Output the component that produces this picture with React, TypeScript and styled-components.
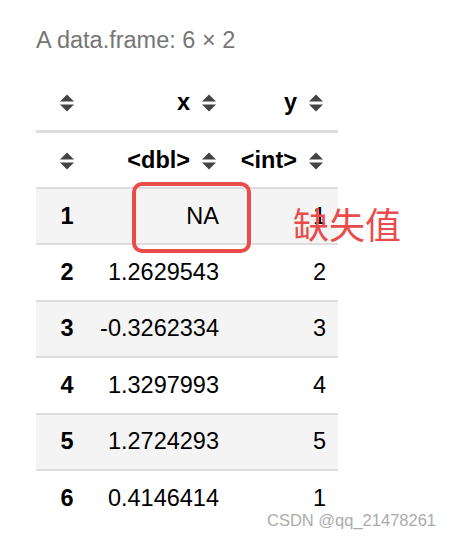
import styled, { createGlobalStyle } from "styled-components";
import { Fragment } from "react";

const GlobalStyle = createGlobalStyle`
    body {
        margin: 0;
        background: #ffffff;
        font-family: "Liberation Sans", Arial, sans-serif;
        color: #111111;
    }
`;

const Page = styled.div`
    position: relative;
    width: 452px;
    height: 538px;
    padding: 27px 0 0 36px;
    box-sizing: border-box;
    overflow: hidden;
`;
const Caption = styled.div`
    font-size: 23.5px;
    line-height: 27px;
    color: #767676;
`;
const Table = styled.table`
    margin-top: 21px;
    width: 302px;
    table-layout: fixed;
    border-collapse: separate;
    border-spacing: 0;
    font-size: 23.5px;
`;
const HeadCell = styled.th<{ $index?: boolean; $last?: boolean }>`
    padding: 0 ${(p) => (p.$index ? "0" : "15px")} 0 0;
    height: ${(p) => (p.$last ? "54px" : "55px")};
    text-align: ${(p) => (p.$index ? "center" : "right")};
    font-weight: bold;
    white-space: nowrap;
    border-bottom: ${(p) => (p.$last ? "2px" : "3px")} solid #dddddd;
    color: #000000;
`;
const Row = styled.tr<{ $shaded: boolean }>`
    background: ${(p) => (p.$shaded ? "#f4f4f4" : "#ffffff")};

    &:last-child > * {
        border-bottom-color: transparent;
    }
`;
const IndexCell = styled.th`
    height: 54.4px;
    padding: 0;
    text-align: center;
    font-weight: bold;
    border-bottom: 2px solid #dddddd;
    color: #000000;
`;
const Cell = styled.td`
    height: 54.4px;
    padding: 0 12px 0 0;
    text-align: right;
    border-bottom: 2px solid #dddddd;
    color: #000000;
`;
const SortIcon = styled.svg<{ $gap?: boolean }>`
    display: inline-block;
    width: 14px;
    height: 18px;
    vertical-align: -2px;
    margin-left: ${(p) => (p.$gap ? "12px" : "0")};
`;
const Marker = styled.div`
    position: absolute;
    left: 132px;
    top: 182px;
    width: 119px;
    height: 71px;
    box-sizing: border-box;
    border: 4px solid #ea4b4b;
    border-radius: 10px;
`;
const Note = styled.div`
    position: absolute;
    left: 293px;
    top: 205px;
    font-family: "Noto Sans CJK SC", "Noto Sans", sans-serif;
    font-size: 36px;
    line-height: 36px;
    color: #ea4b4b;
`;
const Watermark = styled.div`
    position: absolute;
    left: 267px;
    top: 510px;
    font-size: 16.5px;
    line-height: 20px;
    color: #ababab;
`;

function Sort({ gap }: { gap?: boolean }) {
    return (
        <SortIcon $gap={gap} viewBox="0 0 14 18">
            <polygon points="7,0.5 14,7.6 0,7.6" fill="#444444" />
            <polygon points="0,10.4 14,10.4 7,17.5" fill="#444444" />
        </SortIcon>
    );
}

const rows: [string, string][] = [
    ["NA", "1"],
    ["1.2629543", "2"],
    ["-0.3262334", "3"],
    ["1.3297993", "4"],
    ["1.2724293", "5"],
    ["0.4146414", "1"],
];

export default function App() {
    return (
        <Fragment>
            <GlobalStyle />
            <Page>
                <Caption>A data.frame: 6 × 2</Caption>
                <Table>
                    <colgroup>
                        <col style={{ width: 62 }} />
                        <col style={{ width: 133 }} />
                        <col style={{ width: 107 }} />
                    </colgroup>
                    <thead>
                        <tr>
                            <HeadCell $index>
                                <Sort />
                            </HeadCell>
                            <HeadCell>
                                x<Sort gap />
                            </HeadCell>
                            <HeadCell>
                                y<Sort gap />
                            </HeadCell>
                        </tr>
                        <tr>
                            <HeadCell $index $last>
                                <Sort />
                            </HeadCell>
                            <HeadCell $last>
                                &lt;dbl&gt;<Sort gap />
                            </HeadCell>
                            <HeadCell $last>
                                &lt;int&gt;<Sort gap />
                            </HeadCell>
                        </tr>
                    </thead>
                    <tbody>
                        {rows.map(([x, y], i) => (
                            <Row key={i} $shaded={i % 2 === 0}>
                                <IndexCell>{i + 1}</IndexCell>
                                <Cell>{x}</Cell>
                                <Cell>{y}</Cell>
                            </Row>
                        ))}
                    </tbody>
                </Table>
                <Marker />
                <Note>缺失值</Note>
                <Watermark>CSDN @qq_21478261</Watermark>
            </Page>
        </Fragment>
    );
}
